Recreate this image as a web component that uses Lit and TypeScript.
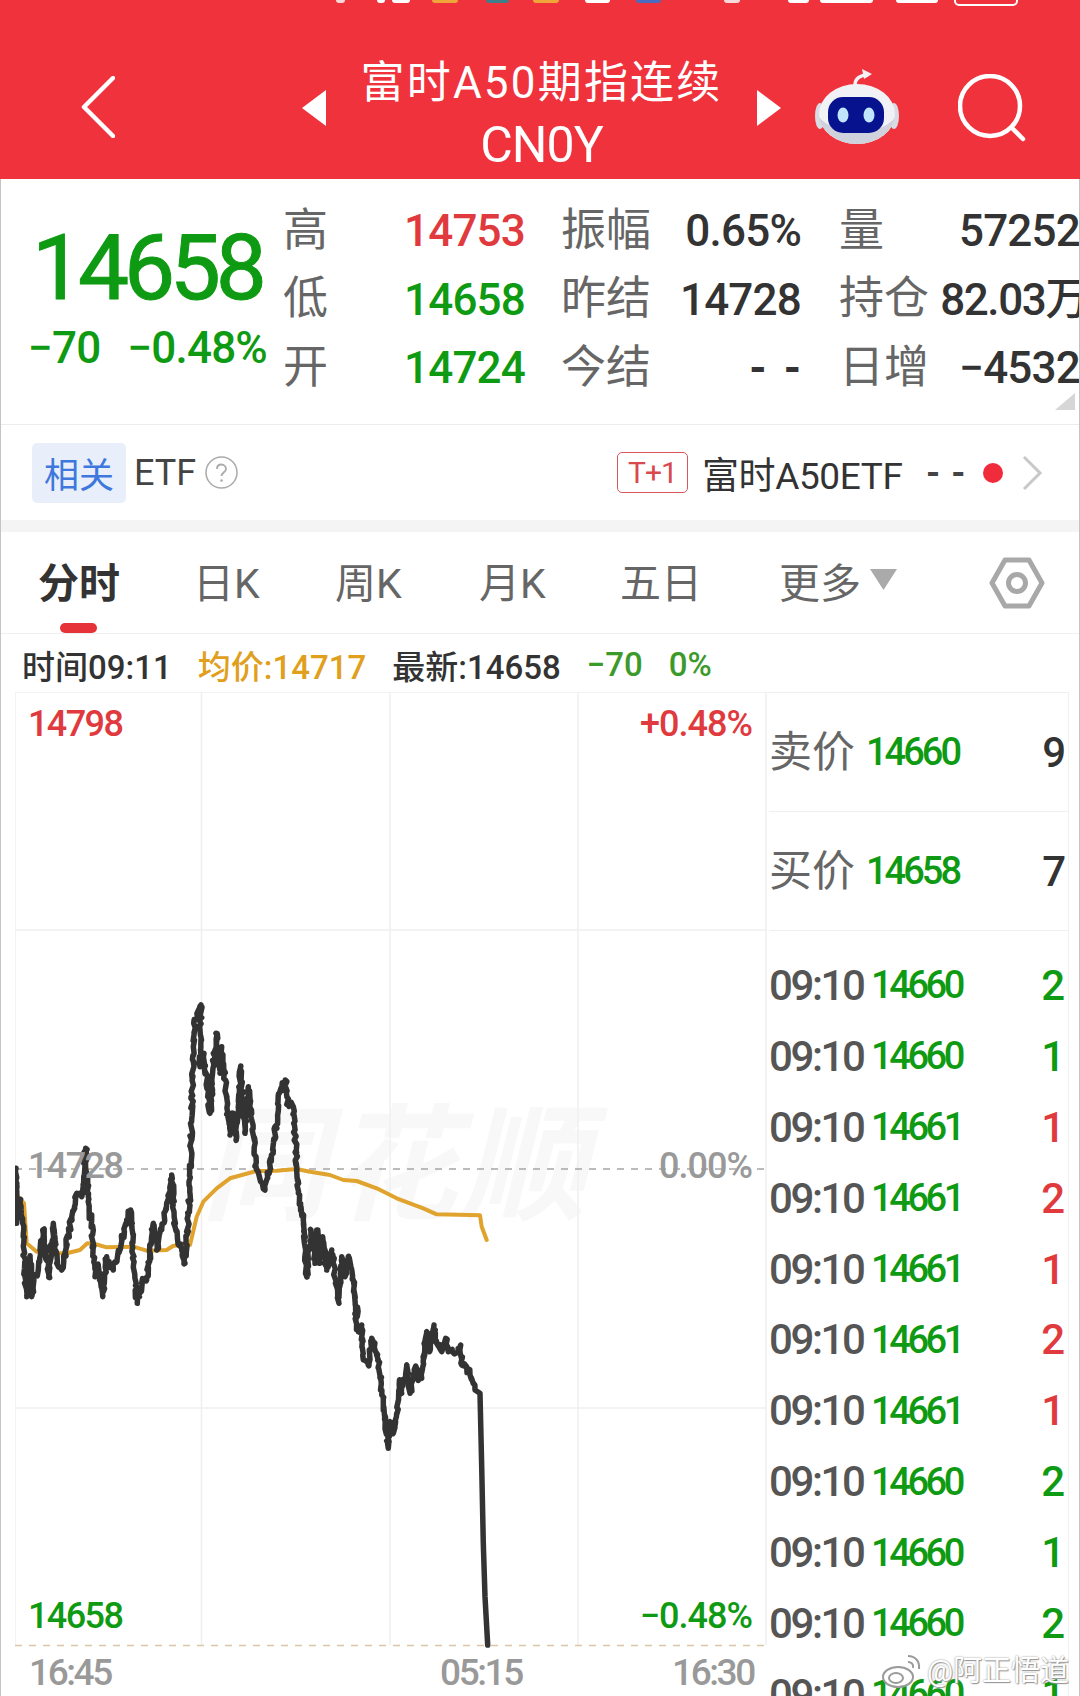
import { LitElement, css, html, svg } from "lit";
import { customElement } from "lit/decorators.js";

// points are in page pixels, the chart svg uses a viewBox in the same space
const toPage = (pts: number[][], ox: number, oy: number) => pts.map(([x, y]) => [ox + x / 3, oy + y / 3]);

// fills a traced line with small ticks so it gets the dense look of the real tick data
function roughen(pts: number[][], amp: number, stopX: number) {
  const out: number[][] = [];
  let seed = 7;
  const rnd = () => {
    seed = (seed * 16807) % 2147483647;
    return seed / 2147483647 - 0.5;
  };
  pts.forEach((p, i) => {
    const n = pts[i + 1];
    out.push(p);
    if (!n || n[0] >= stopX) return;
    const steps = Math.max(3, Math.ceil(Math.hypot(n[0] - p[0], n[1] - p[1]) / 3));
    for (let s = 1; s < steps; s++) {
      const f = s / steps;
      out.push([p[0] + (n[0] - p[0]) * f + rnd() * 2.5, p[1] + (n[1] - p[1]) * f + rnd() * amp]);
    }
  });
  return out;
}

const pricePts = roughen(
  [
    ...toPage(
      [
        [48, 565], [50, 730], [60, 660], [68, 730], [75, 890], [80, 950], [90, 830], [95, 950], [100, 890], [115, 870],
        [128, 750], [135, 800], [148, 890], [160, 730], [170, 850], [185, 870], [205, 770], [215, 710], [230, 640],
        [245, 650], [257, 505], [265, 650], [275, 740], [285, 890], [295, 855], [308, 950], [320, 830], [340, 870],
        [365, 780], [380, 720], [392, 690], [400, 830], [412, 970], [425, 910], [440, 900], [460, 730], [470, 810],
        [490, 730], [500, 670], [515, 585], [525, 740], [555, 850], [570, 640], [580, 200], [585, 120], [603, 75],
        [600, 260], [612, 220], [630, 400], [648, 160], [660, 280], [665, 200], [690, 465], [700, 400], [708, 480],
        [722, 260], [735, 460], [745, 320], [770, 570], [795, 630], [820, 510], [838, 340], [856, 300], [865, 375],
        [880, 380], [895, 640], [910, 720], [920, 890], [933, 750], [945, 850], [950, 750], [958, 850], [968, 770],
        [980, 870], [995, 810], [1017, 970], [1025, 830], [1035, 890], [1045, 830], [1060, 900], [1072, 1010],
      ],
      0,
      980
    ),
    ...toPage(
      [
        [165, 100], [175, 155], [185, 135], [190, 240], [205, 255], [215, 175], [235, 240], [265, 505], [270, 425],
        [280, 460], [290, 400], [300, 300], [305, 340], [320, 255], [330, 340], [347, 258], [355, 295], [365, 295],
        [370, 240], [380, 155], [388, 215], [402, 135], [410, 190], [425, 215], [437, 175], [445, 215], [475, 215],
        [482, 195], [485, 255], [500, 260], [510, 285], [525, 330], [540, 340], [545, 560], [550, 790], [555, 950],
        [563, 1095],
      ],
      300,
      1280
    ),
  ],
  8,
  478
);

const avgPts = toPage(
  [
    [55, 650], [72, 670], [80, 790], [110, 815], [150, 820], [200, 820], [240, 810], [262, 790], [285, 792], [320, 802],
    [400, 800], [440, 812], [500, 810], [520, 797], [570, 795], [590, 710], [610, 665], [650, 625], [690, 595],
    [770, 573], [830, 572], [890, 567], [930, 575], [990, 585], [1030, 600], [1070, 603], [1130, 625], [1190, 655],
    [1270, 685], [1310, 703], [1440, 706], [1445, 740], [1460, 780],
  ],
  0,
  980
);

const line = (pts: number[][]) => pts.map(([x, y]) => `${x.toFixed(1)},${y.toFixed(1)}`).join(" ");

const statusBits = [
  { x: 336, w: 9, c: "#f7d9da" },
  { x: 377, w: 8, c: "#ffffff" },
  { x: 392, w: 18, c: "#ffffff" },
  { x: 432, w: 26, c: "#f0a53a" },
  { x: 486, w: 23, c: "#3f7f8c" },
  { x: 533, w: 26, c: "#f0a53a" },
  { x: 585, w: 25, c: "#ffffff" },
  { x: 636, w: 25, c: "#4a6cc0" },
  { x: 724, w: 16, c: "#f7d9da" },
  { x: 788, w: 21, c: "#ffffff" },
  { x: 820, w: 53, c: "#ffffff" },
  { x: 896, w: 42, c: "#ffffff" },
];

const ticks: [string, string, string][] = [
  ["09:10", "14660", "2"],
  ["09:10", "14660", "1"],
  ["09:10", "14661", "1"],
  ["09:10", "14661", "2"],
  ["09:10", "14661", "1"],
  ["09:10", "14661", "2"],
  ["09:10", "14661", "1"],
  ["09:10", "14660", "2"],
  ["09:10", "14660", "1"],
  ["09:10", "14660", "2"],
  ["09:10", "14660", "1"],
];

@customElement("app-root")
export class AppRoot extends LitElement {
  static styles = css`
    :host {
      display: block;
      width: 1080px;
      height: 1696px;
      overflow: hidden;
      position: relative;
      background: #fff;
      font-family: Roboto, "Noto Sans CJK SC", sans-serif;
      color: #333;
    }

    .frame {
      position: absolute;
      inset: 179px 0 0 0;
      border-left: 1px solid #c4c4c4;
      border-right: 1px solid #c4c4c4;
      pointer-events: none;
    }

    .header {
      position: relative;
      height: 179px;
      background: #f0323c;
      color: #fff;
      display: flex;
      align-items: center;
      box-sizing: border-box;
      padding-left: 81px;
    }
    .status-bit {
      position: absolute;
      top: 0;
      height: 3px;
      border-radius: 0 0 4px 4px;
    }
    .battery {
      position: absolute;
      top: -8px;
      left: 954px;
      width: 60px;
      height: 10px;
      border: 2px solid #fff;
      border-radius: 5px;
    }
    .back {
      width: 34px;
      height: 62px;
      margin-top: 34px;
      flex: none;
    }
    .tri {
      width: 24px;
      height: 36px;
      flex: none;
      margin-top: 37px;
    }
    .tri.left {
      margin-left: 187px;
    }
    .title {
      width: 431px;
      text-align: center;
      flex: none;
      padding-top: 48px;
    }
    .title .cn {
      font-size: 44px;
      line-height: 62px;
      letter-spacing: 2.2px;
    }
    .title .code {
      font-size: 50px;
      line-height: 62px;
      letter-spacing: -1px;
    }
    .robot {
      width: 84px;
      height: 76px;
      margin-left: 34px;
      margin-top: 34px;
      flex: none;
    }
    .search {
      width: 68px;
      height: 68px;
      margin-left: 59px;
      margin-top: 36px;
      flex: none;
    }

    .quote {
      position: relative;
      height: 246px;
      box-sizing: border-box;
      border-bottom: 1px solid #ececec;
      display: flex;
      overflow: hidden;
    }
    .last {
      width: 284px;
      flex: none;
      color: #0e9a12;
      padding: 44px 0 0 32px;
      box-sizing: border-box;
    }
    .last .big {
      font-size: 91px;
      line-height: 90px;
      letter-spacing: -5.2px;
      -webkit-text-stroke: 1px #0e9a12;
    }
    .last .chg {
      display: flex;
      gap: 27px;
      margin-left: -4px;
      font-size: 44px;
      font-weight: 500;
      line-height: 50px;
      letter-spacing: -0.8px;
      margin-top: 10px;
    }
    .table {
      display: grid;
      grid-template-columns: 120px 119px 139px 139px 129px 150px;
      grid-auto-rows: 68.5px;
      padding-top: 16px;
      align-items: center;
      white-space: nowrap;
    }
    .table .k {
      font-size: 45px;
      line-height: 1;
      color: #666;
      margin-top: 2px;
      margin-left: -1px;
    }
    .table .k.pad {
      padding-left: 39px;
    }
    .table .v {
      font-size: 44px;
      font-weight: 500;
      line-height: 1;
      text-align: right;
      letter-spacing: -0.8px;
      margin-top: 4px;
    }
    .table .v.over {
      margin-right: -8px;
      letter-spacing: -1.4px;
    }
    .table .v .dash {
      letter-spacing: 17px;
      margin-right: -17px;
      font-weight: 700;
    }
    .red {
      color: #e03a3e;
    }
    .green {
      color: #0e9a12;
    }
    .corner {
      position: absolute;
      right: 5px;
      top: 214px;
      width: 0;
      height: 0;
      border-bottom: 17px solid #d6d6d6;
      border-left: 20px solid transparent;
    }

    .etf {
      height: 95px;
      display: flex;
      align-items: center;
      padding-left: 32px;
      box-sizing: border-box;
      font-size: 36px;
      color: #444;
    }
    .chip {
      width: 94px;
      height: 60px;
      background: #e8effa;
      color: #3e78dc;
      border-radius: 5px;
      display: flex;
      align-items: center;
      justify-content: center;
      font-size: 35px;
    }
    .etf .name {
      margin-left: 8px;
    }
    .help {
      width: 33px;
      height: 33px;
      margin-left: 9px;
    }
    .tag {
      margin-left: auto;
      width: 71px;
      height: 41px;
      box-sizing: border-box;
      border: 1px solid #d9575c;
      border-radius: 5px;
      color: #d9484d;
      font-size: 30px;
      letter-spacing: -1px;
      display: flex;
      align-items: center;
      justify-content: center;
    }
    .fund {
      margin-left: 14px;
      font-size: 37px;
      width: 204px;
      white-space: nowrap;
      letter-spacing: -0.4px;
      color: #333;
    }
    .etf .dash {
      margin-left: 20px;
      width: 44px;
      font-size: 36px;
      font-weight: 700;
      letter-spacing: 11px;
      white-space: nowrap;
    }
    .dot {
      width: 20px;
      height: 20px;
      border-radius: 50%;
      background: #f02b3c;
      margin-left: 13px;
    }
    .more {
      width: 22px;
      height: 36px;
      margin-left: 18px;
      margin-right: 37px;
    }

    .band {
      height: 12px;
      background: #f4f4f4;
    }

    .tabs {
      position: relative;
      height: 102px;
      box-sizing: border-box;
      border-bottom: 1px solid #efefef;
      display: grid;
      grid-template-columns: 155px 142px 144px 141px 159px 91px 119px 60px;
      align-items: center;
      padding-left: 38px;
      padding-bottom: 6px;
      font-size: 41px;
      color: #666;
      white-space: nowrap;
    }
    .tabs .on {
      font-weight: 700;
      color: #333;
      font-size: 41px;
    }
    .tabs .on::after {
      content: "";
      position: absolute;
      left: 60px;
      bottom: 0;
      width: 37px;
      height: 10px;
      border-radius: 5px;
      background: #e6333a;
    }
    .caret {
      width: 27px;
      height: 21px;
    }
    .hex {
      width: 56px;
      height: 54px;
      margin-top: 6px;
    }

    .info {
      height: 58px;
      display: flex;
      align-items: center;
      font-size: 33px;
      font-weight: 500;
      white-space: nowrap;
      color: #333;
      padding-left: 22px;
      padding-top: 3px;
      box-sizing: border-box;
    }
    .info span {
      flex: none;
      margin-left: 26px;
    }
    .info span:first-child {
      margin-left: 0;
    }
    .info .avg {
      color: #e0a01e;
    }
    .info .g {
      color: #3c9a2a;
    }

    .body {
      display: flex;
      padding-left: 15px;
      height: 1004px;
    }
    .chart {
      position: relative;
      width: 752px;
      height: 1004px;
      flex: none;
    }
    .chart svg {
      position: absolute;
      inset: 0;
      width: 752px;
      height: 1004px;
    }
    .mark {
      position: absolute;
      left: 186px;
      top: 400px;
      font-size: 126px;
      line-height: 150px;
      font-weight: 700;
      font-style: italic;
      color: #f8f8f8;
      white-space: nowrap;
      letter-spacing: 4px;
    }
    .lab {
      position: absolute;
      font-size: 36px;
      font-weight: 500;
      line-height: 40px;
      letter-spacing: -1.6px;
      white-space: nowrap;
    }
    .lab.r {
      right: 15px;
      letter-spacing: -1px;
    }
    .lab.l {
      left: 13px;
    }
    .lab.gray {
      color: #999;
    }
    .time {
      position: absolute;
      top: 959px;
      font-size: 37px;
      font-weight: 500;
      line-height: 44px;
      letter-spacing: -2.4px;
      color: #999;
    }

    .side {
      width: 302px;
      flex: none;
      box-sizing: border-box;
      border-right: 1px solid #f0f0f0;
      border-top: 1px solid #efefef;
      padding-left: 2px;
    }
    .book {
      height: 119px;
      box-sizing: border-box;
      border-bottom: 1px solid #efefef;
      display: flex;
      align-items: center;
      padding-right: 2px;
    }
    .book .k {
      font-size: 43px;
      color: #666;
      width: 97px;
      line-height: 1;
    }
    .book .p {
      font-size: 38px;
      font-weight: 500;
      letter-spacing: -3px;
      color: #0e9a12;
    }
    .book .q {
      margin-left: auto;
      font-size: 42px;
      font-weight: 500;
      color: #333;
    }
    .ticks {
      padding-top: 19px;
    }
    .tick {
      height: 70.9px;
      display: flex;
      align-items: center;
      padding-right: 3px;
    }
    .tick .t {
      width: 102px;
      font-size: 42px;
      font-weight: 500;
      letter-spacing: -2.4px;
      color: #555;
    }
    .tick .p {
      font-size: 38px;
      font-weight: 500;
      letter-spacing: -3.4px;
      color: #0e9a12;
    }
    .tick .q {
      margin-left: auto;
      font-size: 42px;
      font-weight: 500;
    }

    .weibo {
      position: absolute;
      right: 11px;
      bottom: 7px;
      display: flex;
      align-items: center;
      gap: 4px;
      font-size: 29px;
      line-height: 36px;
      color: #fff;
      text-shadow: 0 0 2px #8a8a8a, 1px 1px 1px #9a9a9a;
    }
    .weibo svg {
      width: 42px;
      height: 36px;
    }
  `;

  private chartSvg() {
    return html`<svg viewBox="15 692 752 1004" fill="none">
      ${svg`
        <g stroke="#efefef" stroke-width="1.5">
          <path d="M15 692H767M15 930H767M15 1408H767" />
          <path d="M15 692V1645M201.500 692V1645M390 692V1645M578 692V1645M766 692V1645" />
        </g>
        <path d="M15 1169H767" stroke="#a5a5a5" stroke-width="1.5" stroke-dasharray="7 7" />
        <path d="M15 1645.500H767" stroke="#d8c8a8" stroke-width="1.5" stroke-dasharray="7 7" />
        <polyline points=${line(avgPts)} stroke="#e0a32e" stroke-width="4" stroke-linejoin="round" stroke-linecap="round" />
        <polyline points=${line(pricePts)} stroke="#333" stroke-width="5.500" stroke-linejoin="round" stroke-linecap="round" />
      `}
    </svg>`;
  }

  render() {
    return html`
      <div class="header">
        ${statusBits.map((b) => html`<i class="status-bit" style="left:${b.x}px;width:${b.w}px;background:${b.c}"></i>`)}
        <i class="battery"></i>
        <svg class="back" viewBox="0 0 34 62" fill="none"><path d="M32 2L3 31L32 60" stroke="#fff" stroke-width="4.500" stroke-linecap="round" stroke-linejoin="round" /></svg>
        <svg class="tri left" viewBox="0 0 24 36"><path d="M24 0V36L0 18Z" fill="#fff" /></svg>
        <div class="title">
          <div class="cn">富时A50期指连续</div>
          <div class="code">CN0Y</div>
        </div>
        <svg class="tri" viewBox="0 0 24 36"><path d="M0 0V36L24 18Z" fill="#fff" /></svg>
        <svg class="robot" viewBox="0 0 84 76">
          <path d="M40 16C40 9 46 6 52 6" fill="none" stroke="#f3f3f6" stroke-width="3.500" stroke-linecap="round" />
          <path d="M47 0L57 5L49 10Z" fill="#f3f3f6" />
          <ellipse cx="5" cy="47" rx="5" ry="13" fill="#d9dbe3" />
          <ellipse cx="79" cy="47" rx="5" ry="13" fill="#d9dbe3" />
          <ellipse cx="42" cy="45" rx="38" ry="30" fill="#f1f2f6" />
          <path d="M42 75C62 75 78 62 80 48C70 66 20 68 4 48C6 62 22 75 42 75Z" fill="#cfd2dc" />
          <rect x="13" y="28" width="56" height="36" rx="15" fill="#07128e" />
          <ellipse cx="28" cy="46" rx="5.500" ry="7.500" fill="#bfe4fb" />
          <ellipse cx="54" cy="46" rx="5.500" ry="7.500" fill="#bfe4fb" />
        </svg>
        <svg class="search" viewBox="0 0 68 68" fill="none">
          <circle cx="32" cy="32" r="30" stroke="#fff" stroke-width="4.500" />
          <path d="M54 54L65 65" stroke="#fff" stroke-width="4.500" stroke-linecap="round" />
        </svg>
      </div>

      <div class="quote">
        <div class="last">
          <div class="big">14658</div>
          <div class="chg"><span>−70</span><span>−0.48%</span></div>
        </div>
        <div class="table">
          <span class="k">高</span><span class="v red">14753</span>
          <span class="k pad">振幅</span><span class="v">0.65%</span>
          <span class="k pad">量</span><span class="v">57252</span>
          <span class="k">低</span><span class="v green">14658</span>
          <span class="k pad">昨结</span><span class="v">14728</span>
          <span class="k pad">持仓</span><span class="v over">82.03万</span>
          <span class="k">开</span><span class="v green">14724</span>
          <span class="k pad">今结</span><span class="v"><span class="dash">--</span></span>
          <span class="k pad">日增</span><span class="v">−4532</span>
        </div>
        <i class="corner"></i>
      </div>

      <div class="etf">
        <span class="chip">相关</span>
        <span class="name">ETF</span>
        <svg class="help" viewBox="0 0 33 33" fill="none">
          <circle cx="16.500" cy="16.500" r="15.500" stroke="#aaa" stroke-width="1.500" />
          <path d="M12 13C12 10 14 8.500 16.500 8.500S21 10.500 21 13C21 16 16.500 16.500 16.500 20" stroke="#aaa" stroke-width="1.800" />
          <circle cx="16.500" cy="24.500" r="1.300" fill="#aaa" />
        </svg>
        <span class="tag">T+1</span>
        <span class="fund">富时A50ETF</span>
        <span class="dash">--</span>
        <i class="dot"></i>
        <svg class="more" viewBox="0 0 22 36" fill="none"><path d="M3 2L19 18L3 34" stroke="#c8c8c8" stroke-width="3" /></svg>
      </div>
      <div class="band"></div>

      <div class="tabs">
        <span class="on">分时</span>
        <span>日K</span>
        <span>周K</span>
        <span>月K</span>
        <span>五日</span>
        <span>更多</span>
        <svg class="caret" viewBox="0 0 27 21"><path d="M0 0H27L13.500 21Z" fill="#aaa" /></svg>
        <svg class="hex" viewBox="0 0 56 54" fill="none">
          <path d="M16 4H40L53 27L40 50H16L3 27Z" stroke="#a8a8a8" stroke-width="5" stroke-linejoin="round" />
          <circle cx="28" cy="27" r="8.500" stroke="#a8a8a8" stroke-width="5" />
        </svg>
      </div>

      <div class="info">
        <span>时间09:11</span>
        <span class="avg">均价:14717</span>
        <span class="new">最新:14658</span>
        <span class="g">−70</span>
        <span class="g">0%</span>
      </div>

      <div class="body">
        <div class="chart">
          <div class="mark">同花顺</div>
          ${this.chartSvg()}
          <span class="lab l red" style="top:12px">14798</span>
          <span class="lab r red" style="top:12px">+0.48%</span>
          <span class="lab l gray" style="top:454px">14728</span>
          <span class="lab r gray" style="top:454px">0.00%</span>
          <span class="lab l green" style="top:904px">14658</span>
          <span class="lab r green" style="top:904px">−0.48%</span>
          <span class="time" style="left:14px">16:45</span>
          <span class="time" style="left:425px">05:15</span>
          <span class="time" style="left:657px">16:30</span>
        </div>
        <div class="side">
          <div class="book"><span class="k">卖价</span><span class="p">14660</span><span class="q">9</span></div>
          <div class="book"><span class="k">买价</span><span class="p">14658</span><span class="q">7</span></div>
          <div class="ticks">
            ${ticks.map(
              ([t, p, q]) => html`<div class="tick">
                <span class="t">${t}</span>
                <span class="p">${p}</span>
                <span class="q ${p === "14661" ? "red" : "green"}">${q}</span>
              </div>`
            )}
          </div>
        </div>
      </div>

      <div class="weibo">
        <svg viewBox="0 0 42 36" fill="none" stroke="#9a9a9a" stroke-width="2">
          <ellipse cx="17" cy="24" rx="15" ry="10" fill="#fff" />
          <ellipse cx="15" cy="25" rx="7" ry="5" />
          <path d="M27 3C34 3 39 8 38 16" />
          <path d="M27 9C30 9 33 11 32 15" />
        </svg>
        <span>@阿正悟道</span>
      </div>
      <div class="frame"></div>
    `;
  }
}
